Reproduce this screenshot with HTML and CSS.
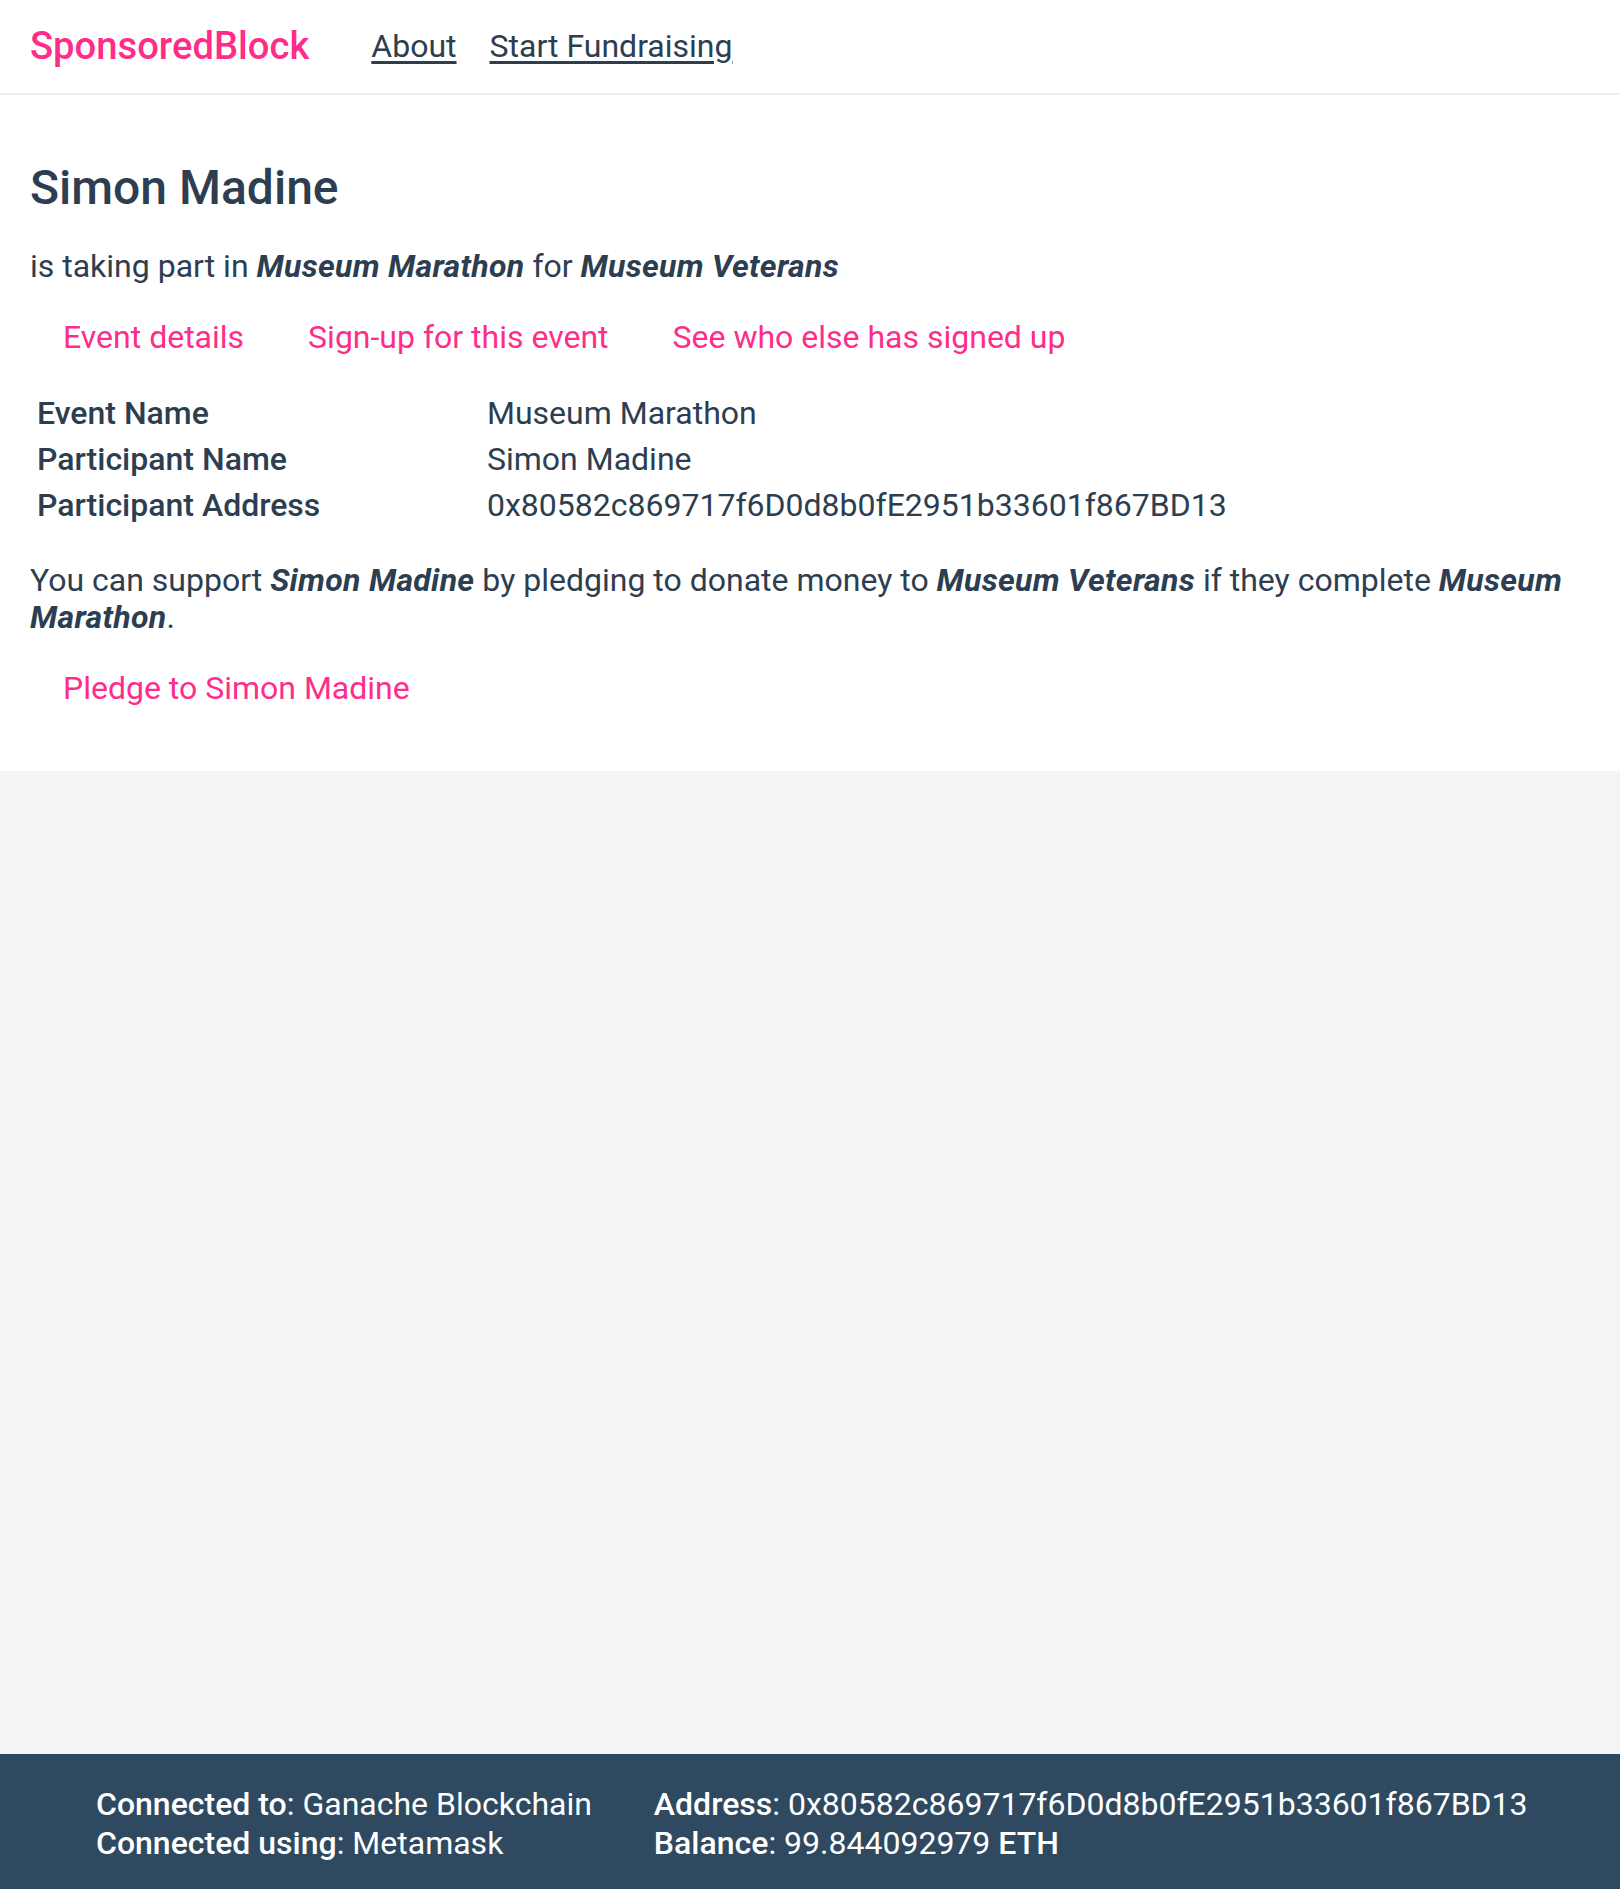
FILE: index.html
```html
<!DOCTYPE html>
<html lang="en">
<head>
<meta charset="utf-8">
<title>SponsoredBlock</title>
<link rel="stylesheet" href="styles.css">
</head>
<body>
<div class="app">
  <header class="topbar">
    <a class="logo" href="#">SponsoredBlock</a>
    <nav class="nav">
      <a href="#">About</a>
      <a href="#">Start Fundraising</a>
    </nav>
  </header>
  <main class="content">
    <h1 class="title">Simon Madine</h1>
    <p class="intro">is taking part in <em>Museum Marathon</em> for <em>Museum Veterans</em></p>
    <ul class="links">
      <li><a href="#">Event details</a></li>
      <li><a href="#">Sign-up for this event</a></li>
      <li><a href="#">See who else has signed up</a></li>
    </ul>
    <table class="details">
      <tbody>
        <tr><th>Event Name</th><td>Museum Marathon</td></tr>
        <tr><th>Participant Name</th><td>Simon Madine</td></tr>
        <tr><th>Participant Address</th><td>0x80582c869717f6D0d8b0fE2951b33601f867BD13</td></tr>
      </tbody>
    </table>
    <p class="support">You can support <em>Simon Madine</em> by pledging to donate money to <em>Museum Veterans</em> if they complete <em>Museum Marathon</em>.</p>
    <ul class="links links-last">
      <li><a href="#">Pledge to Simon Madine</a></li>
    </ul>
  </main>
  <div class="filler"></div>
  <footer class="footer">
    <div class="col">
      <div><strong>Connected to</strong>: Ganache Blockchain</div>
      <div><strong>Connected using</strong>: Metamask</div>
    </div>
    <div class="col">
      <div><strong>Address</strong>: 0x80582c869717f6D0d8b0fE2951b33601f867BD13</div>
      <div><strong>Balance</strong>: 99.844092979 <strong>ETH</strong></div>
    </div>
  </footer>
</div>
</body>
</html>
```
FILE: styles.css
```css
html, body {
  margin: 0;
  padding: 0;
}
body {
  font-family: Roboto, "Liberation Sans", Arial, sans-serif;
  color: #2c3e50;
  background: #f4f4f4;
  font-size: 32px;
  line-height: 37px;
}
.app {
  min-height: 1889px;
  display: flex;
  flex-direction: column;
}
.topbar {
  background: #fff;
  height: 93px;
  display: flex;
  align-items: center;
  padding: 0 30px;
  border-bottom: 2px solid #eeeeee;
}
.logo {
  color: #ff2d8a;
  font-size: 38.2px;
  font-weight: 500;
  text-decoration: none;
}
.nav {
  display: flex;
  gap: 33px;
  margin-left: 62px;
}
.nav a {
  color: #2c3e50;
  font-size: 32px;
  text-decoration: underline;
  text-underline-offset: 4px;
}
.content {
  background: #fff;
  padding: 65px 30px 64px;
}
.title {
  font-size: 48px;
  font-weight: 500;
  margin: 0 0 32px;
  line-height: 56px;
}
.intro, .support {
  margin: 0;
}
em {
  font-style: italic;
  font-weight: 700;
  letter-spacing: 0.3px;
}
.links {
  list-style: none;
  display: flex;
  gap: 64px;
  margin: 34px 0;
  padding: 0 0 0 33px;
}
.links-last {
  margin-bottom: 0;
}
.links a {
  color: #ff2d8a;
  text-decoration: none;
}
.details {
  border-collapse: separate;
  border-spacing: 0;
  margin: 0 0 34px 7px;
}
.details th {
  text-align: left;
  font-weight: 500;
  width: 450px;
  padding: 0;
  height: 46px;
}
.details td {
  padding: 0;
}
.filler {
  flex: 1;
}
.footer {
  background: #2e4960;
  color: #fff;
  height: 135px;
  box-sizing: border-box;
  display: flex;
  align-items: center;
  gap: 62px;
  padding: 4px 96px 0;
  font-size: 32px;
  line-height: 39px;
  white-space: nowrap;
}
.footer .col {
  flex: none;
}
.footer strong {
  font-weight: 500;
}
```
